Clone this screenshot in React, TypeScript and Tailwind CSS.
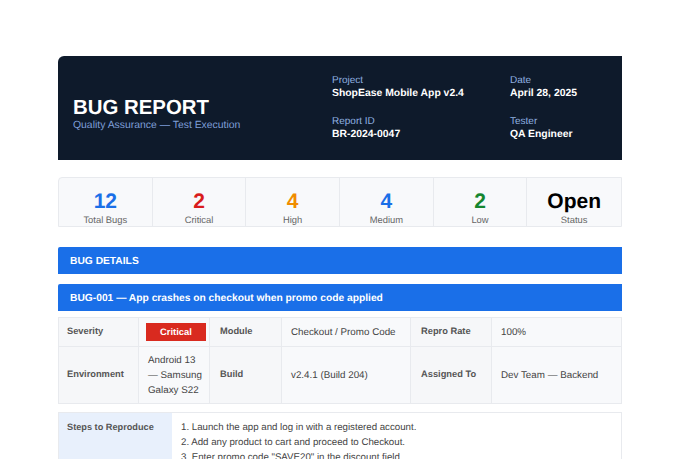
import React from 'react';

const stats = [
  { value: '12', label: 'Total Bugs', color: 'text-[#1a6fe8]' },
  { value: '2', label: 'Critical', color: 'text-[#d91c1c]' },
  { value: '4', label: 'High', color: 'text-[#f08c00]' },
  { value: '4', label: 'Medium', color: 'text-[#1a6fe8]' },
  { value: '2', label: 'Low', color: 'text-[#15862f]' },
  { value: 'Open', label: 'Status', color: 'text-black' },
];

function Meta({ label, value }: { label: string; value: string }) {
  return (
    <div>
      <div className="text-[10px] leading-[13px] text-[#8fb0e0]">{label}</div>
      <div className="text-[10.4px] leading-[14px] font-bold text-white">{value}</div>
    </div>
  );
}

function Label({ children, first }: { children: React.ReactNode; first?: boolean }) {
  return (
    <div className={`flex items-center bg-[#f6f7f9] border-r border-b border-[#e8eaee] text-[9.3px] font-bold text-[#555] ${first ? 'pl-[8px]' : 'pl-[10px]'}`}>
      {children}
    </div>
  );
}

function Cell({ children, last }: { children: React.ReactNode; last?: boolean }) {
  return (
    <div className={`flex items-center bg-[#f8f9fb] border-b border-[#e8eaee] pl-[9px] pr-[5px] text-[9.8px] leading-[15px] text-[#444] ${last ? '' : 'border-r'}`}>
      {children}
    </div>
  );
}

export default function App() {
  return (
    <div className="h-[459px] overflow-hidden bg-white px-[58px] pt-[56px] font-['Liberation_Sans',Arial,sans-serif] [text-rendering:geometricPrecision]">
      {/* Header */}
      <div className="flex h-[104px] rounded-tl-[6px] bg-[#0e1a2b] pl-[15px]">
        <div className="flex w-[259px] flex-col justify-center pt-[11px]">
          <h1 className="text-[20.4px] leading-[24px] font-bold text-white">BUG REPORT</h1>
          <p className="text-[10.4px] leading-[12px] text-[#7f9fd8]">Quality Assurance — Test Execution</p>
        </div>
        <div className="grid flex-1 grid-cols-[178px_1fr] content-start gap-y-[14px] pt-[18px]">
          <Meta label="Project" value="ShopEase Mobile App v2.4" />
          <Meta label="Date" value="April 28, 2025" />
          <Meta label="Report ID" value="BR-2024-0047" />
          <Meta label="Tester" value="QA Engineer" />
        </div>
      </div>

      {/* Stats */}
      <div className="mt-[17px] grid h-[50px] w-[564px] grid-cols-6 rounded-tl-[4px] border border-[#e8eaee] bg-[#f8f9fb]">
        {stats.map((s, i) => (
          <div key={s.label} className={`flex flex-col items-center pt-[13px] ${i < 5 ? 'border-r border-[#e8eaee]' : ''}`}>
            <div className={`text-[21px] leading-[22px] font-bold ${s.color}`}>{s.value}</div>
            <div className="mt-[1px] text-[9.4px] leading-[12px] text-[#666]">{s.label}</div>
          </div>
        ))}
      </div>

      {/* Section */}
      <div className="mt-[20px] flex h-[27px] w-[564px] items-center rounded-tl-[2px] bg-[#1a6fe8] px-[12px] pt-[2px] text-[10.25px] font-bold text-white">
        BUG DETAILS
      </div>
      <div className="mt-[10px] flex h-[27px] w-[564px] items-center rounded-tl-[2px] bg-[#1a6fe8] px-[12px] pt-[2px] text-[10.25px] font-bold text-white">
        BUG-001 — App crashes on checkout when promo code applied
      </div>

      {/* Details table */}
      <div className="mt-[6px] grid w-[564px] grid-cols-[80px_71px_72px_129px_81px_129px] grid-rows-[29px_57px] border-t border-l border-r border-[#e8eaee]">
        <Label first>Severity</Label>
        <Cell>
          <span className="-ml-[2px] block h-[18px] w-[60px] shrink-0 bg-[#d92a1f] text-center text-[9.4px] leading-[18px] font-bold text-white">Critical</span>
        </Cell>
        <Label>Module</Label>
        <Cell>Checkout / Promo Code</Cell>
        <Label>Repro Rate</Label>
        <Cell last>100%</Cell>
        <Label first>Environment</Label>
        <Cell>Android 13 — Samsung Galaxy S22</Cell>
        <Label>Build</Label>
        <Cell>v2.4.1 (Build 204)</Cell>
        <Label>Assigned To</Label>
        <Cell last>Dev Team — Backend</Cell>
      </div>

      {/* Steps */}
      <div className="mt-[8px] flex w-[564px] border border-[#e8eaee]">
        <div className="h-[60px] w-[113px] shrink-0 bg-[#e8f0fc] pl-[8px] pt-[8px] text-[9.2px] leading-[13px] font-bold text-[#555]">
          Steps to Reproduce
        </div>
        <ol className="pl-[9px] pt-[7px] text-[9.7px] leading-[15px] text-[#444]">
          <li>1. Launch the app and log in with a registered account.</li>
          <li>2. Add any product to cart and proceed to Checkout.</li>
          <li>3. Enter promo code "SAVE20" in the discount field.</li>
        </ol>
      </div>
    </div>
  );
}
